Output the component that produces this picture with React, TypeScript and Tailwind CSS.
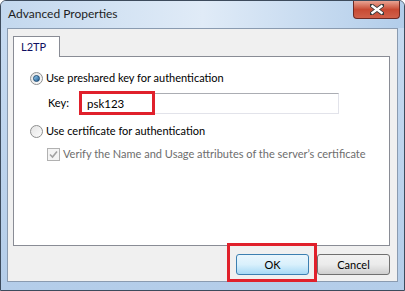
// ── Advanced Properties dialog (Windows 7 look) ──

const font = "font-['Lato','Liberation_Sans',sans-serif]";

function Radio({ checked }: { checked?: boolean }) {
  return (
    <span className="flex h-[13px] w-[13px] shrink-0 items-center justify-center rounded-full border border-[#8e8f8f] bg-gradient-to-br from-[#e4e4e4] to-[#fbfbfb]">
      {checked && (
        <span className="h-[7px] w-[7px] rounded-full border border-[#1c4a73] bg-gradient-to-br from-[#9ad1f4] to-[#1e5b8f]" />
      )}
    </span>
  );
}

function DisabledCheck() {
  return (
    <span className="flex h-[13px] w-[13px] shrink-0 items-center justify-center border border-[#b1b1b1] bg-[#f4f4f4]">
      <svg width="9" height="9" viewBox="0 0 9 9">
        <path d="M1 4.5 L3.5 7 L8 1.5" fill="none" stroke="#a2a2a2" strokeWidth="1.6" />
      </svg>
    </span>
  );
}

function CloseButton() {
  return (
    <div className="flex h-[18px] w-[47px] items-center justify-center self-start rounded-b-[4px] border border-t-0 border-[#6d2a24] bg-gradient-to-b from-[#e8a393] via-[#c84a33] to-[#d0604a]">
      <svg width="14" height="11" viewBox="0 0 14 11">
        <path
          d="M1 1 L13 10 M13 1 L1 10"
          stroke="#3a3a3a"
          strokeWidth="4"
          strokeLinecap="square"
        />
        <path
          d="M1.5 1.5 L12.5 9.5 M12.5 1.5 L1.5 9.5"
          stroke="#ffffff"
          strokeWidth="2.2"
        />
      </svg>
    </div>
  );
}

export default function App() {
  return (
    <div
      className={`${font} flex h-[291px] w-[405px] flex-col overflow-hidden rounded-t-[6px] border border-[#3d4b5c] bg-gradient-to-b from-[#c7dbf1] to-[#b4cde9] text-[11px] text-black`}
    >
      {/* 标题栏 */}
      <div className="flex h-[27px] shrink-0 items-start justify-between bg-gradient-to-r from-[#c3d8ee] via-[#e0ebf7] to-[#b2cdea] pr-[4px]">
        <span className="pl-[7px] pt-[5px] text-[12px] leading-[16px] text-[#1e1e1e]">
          Advanced Properties
        </span>
        <CloseButton />
      </div>

      {/* 客户区 */}
      <div className="mx-[6px] mb-[8px] flex flex-1 flex-col border border-[#8a9bb0] bg-[#f0f0f0] pl-[5px] pr-[7px] pt-[7px]">
        {/* 标签页 */}
        <div className="flex">
          <div className="relative z-10 -mb-px flex h-[21px] w-[47px] items-start border border-b-0 border-[#898c95] bg-white pl-[7px] pt-[2px] leading-[15px] text-[#101060]">
            L2TP
          </div>
        </div>

        <div className="flex h-[190px] flex-col border border-[#898c95] bg-white pl-[16px] pt-[13px]">
          <label className="flex items-center gap-[3px] leading-[16px]">
            <Radio checked />
            <span>Use preshared key for authentication</span>
          </label>

          <div className="mt-[7px] flex items-center pl-[18px]">
            <span className="w-[32px]">Key:</span>
            <div className="relative">
              <div className="flex h-[21px] w-[259px] items-center border border-[#e2e3ea] border-t-[#abadb3] bg-white pl-[6px] text-[11.5px]">
                psk123
              </div>
              <div className="pointer-events-none absolute left-[-1px] top-[-2px] h-[24px] w-[76px] border-[3px] border-[#e0202b]" />
            </div>
          </div>

          <label className="mt-[9px] flex items-center gap-[3px] leading-[16px]">
            <Radio />
            <span>Use certificate for authentication</span>
          </label>

          <div className="mt-[7px] flex items-center gap-[3px] pl-[17px] leading-[16px] text-[#6d6d6d]">
            <DisabledCheck />
            <span className="whitespace-nowrap">Verify the Name and Usage attributes of the server’s certificate</span>
          </div>
        </div>

        {/* 按钮 */}
        <div className="mt-[8px] flex justify-end gap-[8px]">
          <div className="relative">
            <button className="flex h-[21px] w-[73px] items-center justify-center rounded-[3px] border border-[#3c7fb1] bg-gradient-to-b from-[#eaf6fd] via-[#d9f0fc] to-[#a7d9f5] leading-[15px]">
              OK
            </button>
            <div className="pointer-events-none absolute left-[-9px] top-[-11px] h-[39px] w-[90px] border-[3px] border-[#e0202b]" />
          </div>
          <button className="flex h-[21px] w-[73px] items-center justify-center rounded-[3px] border border-[#707070] bg-gradient-to-b from-[#f2f2f2] via-[#ebebeb] to-[#cfcfcf] leading-[15px]">
            Cancel
          </button>
        </div>
      </div>
    </div>
  );
}
